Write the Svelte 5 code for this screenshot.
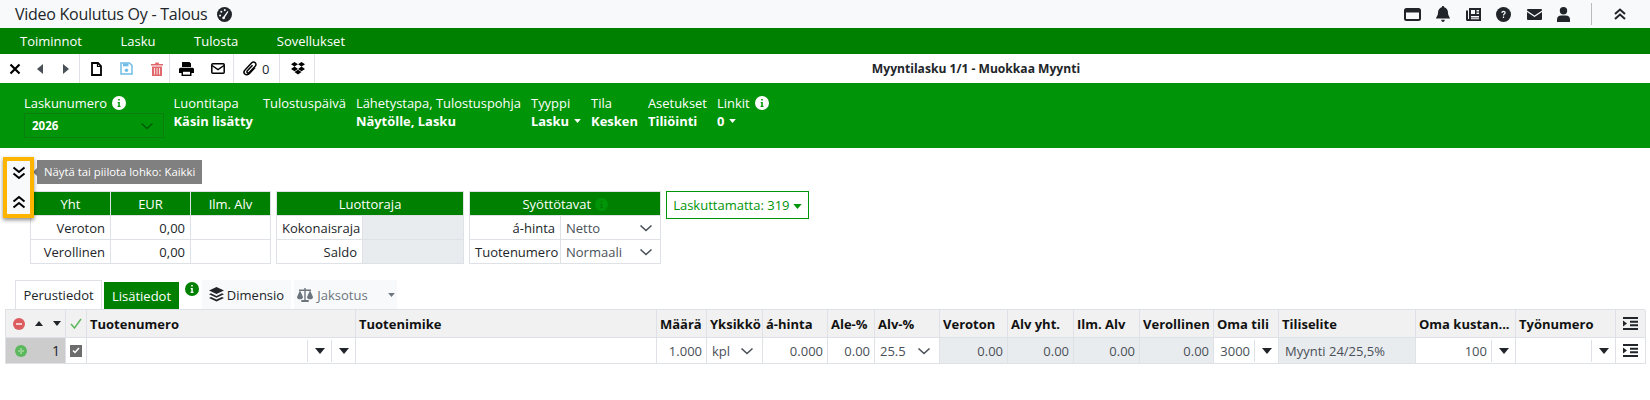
<script>
	const menu = ["Toiminnot", "Lasku", "Tulosta", "Sovellukset"];
	const heads = [
		["Määrä", 50], ["Yksikkö", 56], ["á-hinta", 65], ["Ale-%", 47], ["Alv-%", 65],
		["Veroton", 68], ["Alv yht.", 66], ["Ilm. Alv", 66], ["Verollinen", 74], ["Oma tili", 65],
		["Tiliselite", 137], ["Oma kustan...", 100], ["Työnumero", 100],
	];
</script>

{#snippet chevron()}
	<svg class="chev" width="14" height="8" viewBox="0 0 14 8"><path d="M1.500 1.500 7 6.500l5.500-5" fill="none" stroke="#495057" stroke-width="1.600" /></svg>
{/snippet}

{#snippet caret(cls = "")}
	<svg class="caret {cls}" width="10" height="6" viewBox="0 0 10 6"><path d="M0 0h10L5 6z" fill="currentColor" /></svg>
{/snippet}

{#snippet info(size = 14, bg = "#fff", fg = "#009408")}
	<svg width={size} height={size} viewBox="0 0 14 14" class="info">
		<circle cx="7" cy="7" r="7" fill={bg} />
		<path d="M6.200 3h1.600v1.500H6.200zM5.700 6h2.100v3.800h.7V11H5.600V9.800h.7V7.200h-.6z" fill={fg} />
	</svg>
{/snippet}

{#snippet indent()}
	<svg width="15" height="13" viewBox="0 0 15 13"><path d="M0 0h15v2H0zM7 3.700h8v2H7zM7 7.300h8v2H7zM0 11h15v2H0zM0 3.500l4 3-4 3z" fill="#212529" /></svg>
{/snippet}

<div class="page">
	<header class="topbar">
		<div class="brand">
			<span>Video Koulutus Oy - Talous</span>
			<svg width="15" height="15" viewBox="0 0 16 16"><circle cx="8" cy="8" r="8" fill="#212529" /><path d="M7 10 11.200 4.300l1 .7-3.700 6A1.500 1.500 0 1 1 7 10z" fill="#f8f9fa" /><circle cx="3.300" cy="9" r="1.100" fill="#f8f9fa" /><circle cx="4.600" cy="5" r="1.100" fill="#f8f9fa" /><circle cx="8.300" cy="3.300" r="1.100" fill="#f8f9fa" /></svg>
		</div>
		<div class="tools">
			<svg width="17" height="13" viewBox="0 0 17 13"><rect x="1" y="1" width="15" height="11" rx="1.500" fill="none" stroke="#212529" stroke-width="2" /><rect x="1" y="1" width="15" height="3.500" fill="#212529" /></svg>
			<svg width="14" height="16" viewBox="0 0 14 16"><path d="M7 0c.8 0 1.200.6 1.200 1.300C10.500 1.900 12 4 12 6.500c0 3.500 2 4.700 2 6H0c0-1.300 2-2.500 2-6C2 4 3.500 1.900 5.800 1.300 5.800.6 6.200 0 7 0zM5.200 13.800h3.600C8.800 15 8 16 7 16s-1.800-1-1.800-2.200z" fill="#212529" /></svg>
			<svg width="15" height="13" viewBox="0 0 15 13"><path d="M3 0h12v13H1.500A1.500 1.500 0 0 1 0 11.500V2.500h2v8.500h1zM5 2v4h4V2zm5.500 0v1.500H13V2zm0 2.500V6H13V4.500zM5 8v1.500h8V8zm0 2.200v1h8v-1z" fill="#212529" fill-rule="evenodd" /></svg>
			<svg width="15" height="15" viewBox="0 0 15 15"><circle cx="7.500" cy="7.500" r="7.500" fill="#212529" /><path d="M5.300 5.800c0-1.300 1-2 2.200-2 1.300 0 2.200.8 2.200 1.900 0 1.500-1.600 1.500-1.600 2.800H6.900c0-2 1.600-1.900 1.600-2.800 0-.4-.4-.7-1-.7s-.9.300-1 .9zM6.900 9.500h1.200v1.400H6.900z" fill="#f8f9fa" /></svg>
			<svg width="15" height="11" viewBox="0 0 15 11"><path d="M1 0h13a1 1 0 0 1 1 1v.6L7.500 6.500 0 1.600V1a1 1 0 0 1 1-1zM0 3l7.500 5L15 3v7a1 1 0 0 1-1 1H1a1 1 0 0 1-1-1z" fill="#212529" /></svg>
			<svg width="13" height="15" viewBox="0 0 13 15"><circle cx="6.500" cy="3.700" r="3.700" fill="#212529" /><path d="M0 15v-2.500C0 10 1.800 8.500 4 8.500h5c2.200 0 4 1.500 4 4V15z" fill="#212529" /></svg>
			<span class="vr"></span>
			<svg class="up" width="12" height="12" viewBox="0 0 12 12"><path d="M1 6l5-4.500L11 6M1 11l5-4.500L11 11" fill="none" stroke="#212529" stroke-width="2" /></svg>
		</div>
	</header>

	<nav class="menu">
		{#each menu as m}<span>{m}</span>{/each}
	</nav>

	<div class="toolbar">
		<div class="group g1">
			<svg width="12" height="12" viewBox="0 0 12 12"><path d="M1.500 1.500l9 9M10.500 1.500l-9 9" stroke="#000" stroke-width="2.200" /></svg>
			<svg class="prev" width="6" height="10" viewBox="0 0 6 10"><path d="M6 0v10L0 5z" fill="#495057" /></svg>
			<svg class="next" width="6" height="10" viewBox="0 0 6 10"><path d="M0 0v10l6-5z" fill="#495057" /></svg>
		</div>
		<div class="group g2">
			<svg width="11" height="14" viewBox="0 0 11 14"><path d="M1 1h6l3 3v9H1z" fill="none" stroke="#000" stroke-width="1.800" /><path d="M6.500 1v3.500H10" fill="none" stroke="#000" stroke-width="1.200" /></svg>
			<svg width="13" height="13" viewBox="0 0 13 13"><path d="M1 1h8.500L12 3.500V12H1z" fill="none" stroke="#6fbde6" stroke-width="1.500" /><rect x="3" y="1.500" width="5.500" height="2.800" fill="#6fbde6" /><circle cx="6.500" cy="8.200" r="1.700" fill="#6fbde6" /></svg>
			<svg width="12" height="14" viewBox="0 0 12 14"><path d="M0 2h4l.6-1.500h2.800L8 2h4v1.500H0zM1 4.500h10V14H1z" fill="#e0686d" /><path d="M3.500 6v6.500M6 6v6.500M8.500 6v6.500" stroke="#fff" stroke-width=".8" /></svg>
		</div>
		<div class="group g3">
			<svg width="15" height="14" viewBox="0 0 15 14"><path d="M3 0h7.500L12 1.500V5H3zM1.500 5.800h12A1.500 1.500 0 0 1 15 7.300V11h-2.500v3h-10v-3H0V7.300a1.500 1.500 0 0 1 1.500-1.500z" fill="#000" /><rect x="4" y="9.800" width="7" height="2.800" fill="#fff" /></svg>
			<svg width="14" height="11" viewBox="0 0 14 11"><rect x=".8" y=".8" width="12.400" height="9.400" rx="1" fill="none" stroke="#000" stroke-width="1.500" /><path d="M1 2.500l6 4 6-4" fill="none" stroke="#000" stroke-width="1.500" /></svg>
		</div>
		<div class="group g4">
			<svg width="14" height="15" viewBox="0 0 14 15"><path d="M12 6.500 6.500 12.500C5 14 2.800 14 1.800 13S.8 10.200 2 9l6.500-7C9.800.8 11.200.8 12.200 1.800s1 2.500 0 3.500L6.200 11.500c-.6.600-1.400.6-1.900.1s-.4-1.300.1-1.900L9.500 4.300" fill="none" stroke="#000" stroke-width="1.500" /></svg>
			<span class="count">0</span>
		</div>
		<div class="group g5">
			<svg width="14" height="13" viewBox="0 0 14 13"><path d="M3.500 0 7 2.300 3.500 4.600 0 2.300zM10.500 0 14 2.300l-3.500 2.300L7 2.300zM0 6.900l3.500-2.300L7 6.900 3.500 9.200zM10.500 4.600 14 6.900l-3.500 2.300L7 6.900zM3.500 10 7 7.700l3.500 2.300L7 12.500z" fill="#000" /></svg>
		</div>
		<div class="doc-title">Myyntilasku 1/1 - Muokkaa Myynti</div>
	</div>

	<section class="summary">
		<div class="field first">
			<label>Laskunumero {@render info()}</label>
			<div class="year"><b>2026</b><svg width="14" height="8" viewBox="0 0 14 8"><path d="M1.500 1.500 7 6.500l5.500-5" fill="none" stroke="#005c05" stroke-width="1.500" /></svg></div>
		</div>
		<div class="field"><label>Luontitapa</label><b>Käsin lisätty</b></div>
		<div class="field"><label>Tulostuspäivä</label></div>
		<div class="field"><label>Lähetystapa, Tulostuspohja</label><b>Näytölle, Lasku</b></div>
		<div class="field"><label>Tyyppi</label><b>Lasku{@render caret("tiny")}</b></div>
		<div class="field"><label>Tila</label><b>Kesken</b></div>
		<div class="field"><label>Asetukset</label><b>Tiliöinti</b></div>
		<div class="field"><label>Linkit {@render info()}</label><b>0{@render caret("tiny")}</b></div>
	</section>

	<section class="blocks">
		<div class="toggle">
			<svg width="14" height="14" viewBox="0 0 14 14"><path d="M1.500 1.500 7 6l5.500-4.500M1.500 7.500 7 12l5.500-4.500" fill="none" stroke="#000" stroke-width="2" /></svg>
			<svg width="14" height="14" viewBox="0 0 14 14"><path d="M1.500 6.500 7 2l5.500 4.500M1.500 12.500 7 8l5.500 4.500" fill="none" stroke="#000" stroke-width="2" /></svg>
		</div>
		<div class="tip">Näytä tai piilota lohko: Kaikki</div>

		<table class="mini t1">
			<colgroup><col class="c80" /><col class="c80" /><col class="c80" /></colgroup>
			<thead><tr><th>Yht</th><th>EUR</th><th>Ilm. Alv</th></tr></thead>
			<tbody>
				<tr><td>Veroton</td><td>0,00</td><td></td></tr>
				<tr><td>Verollinen</td><td>0,00</td><td></td></tr>
			</tbody>
		</table>
		<table class="mini t2">
			<colgroup><col class="c86" /><col class="c101" /></colgroup>
			<thead><tr><th colspan="2">Luottoraja</th></tr></thead>
			<tbody>
				<tr><td>Kokonaisraja</td><td class="ro"></td></tr>
				<tr><td>Saldo</td><td class="ro"></td></tr>
			</tbody>
		</table>
		<table class="mini t3">
			<colgroup><col class="c91" /><col class="c100" /></colgroup>
			<thead><tr><th colspan="2">Syöttötavat {@render info(13, "#009408", "#007a06")}</th></tr></thead>
			<tbody>
				<tr><td>á-hinta</td><td><div class="pick"><span>Netto</span>{@render chevron()}</div></td></tr>
				<tr><td>Tuotenumero</td><td><div class="pick"><span>Normaali</span>{@render chevron()}</div></td></tr>
			</tbody>
		</table>
		<button class="unbilled">Laskuttamatta: 319 {@render caret()}</button>
	</section>

	<div class="tabs">
		<span class="tab active">Perustiedot</span>
		<span class="tab green">Lisätiedot</span>
		<span class="tab-info">{@render info(14, "#008000", "#fff")}</span>
		<span class="tab soft">
			<svg width="15" height="15" viewBox="0 0 15 15"><path d="M7.500 0 15 3.500 7.500 7 0 3.500zM2 6.300l5.500 2.600L13 6.300l2 1-7.500 3.500L0 7.300zM2 10l5.500 2.600L13 10l2 1-7.500 3.500L0 11z" fill="#212529" /></svg>
			Dimensio
		</span>
		<span class="tab soft off">
			<svg width="18" height="14" viewBox="0 0 18 14"><path d="M8.300 0h1.400v1.500H15v1.400h-.7l2.700 6c0 1.500-1.300 2.400-3 2.400s-3-.9-3-2.400l2.700-6H9.700V12h3v2H5.300v-2h3V2.900H4.300l2.700 6c0 1.500-1.300 2.400-3 2.400S1 10.400 1 8.900l2.700-6H3V1.500h5.300z" fill="#6c757d" /></svg>
			Jaksotus
			<span class="drop">{@render caret("tiny")}</span>
		</span>
	</div>

	<div class="rows">
		<div class="cell head ctl">
			<svg width="12" height="12" viewBox="0 0 12 12"><circle cx="6" cy="6" r="6" fill="#dc5c60" /><rect x="3" y="5" width="6" height="2" fill="#fff" opacity=".7" /></svg>
			<svg class="arrow" width="8" height="5" viewBox="0 0 8 5"><path d="M0 5h8L4 0z" fill="#212529" /></svg>
			<svg class="arrow" width="8" height="5" viewBox="0 0 8 5"><path d="M0 0h8L4 5z" fill="#212529" /></svg>
		</div>
		<div class="cell head mid"><svg width="12" height="11" viewBox="0 0 12 11"><path d="M1 6l3.500 4L11 1" fill="none" stroke="#5cb85c" stroke-width="1.500" /></svg></div>
		<div class="cell head">Tuotenumero</div>
		<div class="cell head">Tuotenimike</div>
		{#each heads as h}
			<div class="cell head">{h[0]}</div>
		{/each}
		<div class="cell head mid">{@render indent()}</div>

		<div class="cell rownum">
			<svg width="12" height="12" viewBox="0 0 12 12"><circle cx="6" cy="6" r="6" fill="#5cb85c" /><path d="M5 3h2v2h2v2H7v2H5V7H3V5h2z" fill="#8fd08f" /></svg>
			<span>1</span>
		</div>
		<div class="cell mid"><span class="check"><svg width="8" height="7" viewBox="0 0 8 7"><path d="M1 3.500 3 5.500 7 1" fill="none" stroke="#fff" stroke-width="1.500" /></svg></span></div>
		<div class="cell inp">
			<span class="grow"></span>
			<span class="btn">{@render caret()}</span>
			<span class="btn">{@render caret()}</span>
		</div>
		<div class="cell"></div>
		<div class="cell num">1.000</div>
		<div class="cell sel"><span>kpl</span>{@render chevron()}</div>
		<div class="cell num">0.000</div>
		<div class="cell num">0.00</div>
		<div class="cell sel"><span>25.5</span>{@render chevron()}</div>
		<div class="cell num ro">0.00</div>
		<div class="cell num ro">0.00</div>
		<div class="cell num ro">0.00</div>
		<div class="cell num ro">0.00</div>
		<div class="cell inp"><span class="grow num-in">3000</span><span class="btn">{@render caret()}</span></div>
		<div class="cell ro text">Myynti 24/25,5%</div>
		<div class="cell inp"><span class="grow num-in">100</span><span class="btn">{@render caret()}</span></div>
		<div class="cell inp"><span class="grow"></span><span class="btn">{@render caret()}</span></div>
		<div class="cell mid">{@render indent()}</div>
	</div>
</div>

<style>
	:global(body) {
		margin: 0;
		background: #fff;
		font-family: "Open Sans", sans-serif;
		font-size: 13px;
		color: #212529;
	}

	.topbar {
		height: 28px;
		background: #f8f9fa;
		display: flex;
		align-items: center;
		justify-content: space-between;
		padding: 0 24px 0 15px;
	}

	.brand {
		display: flex;
		align-items: center;
		gap: 10px;
		font-size: 16px;
		letter-spacing: -0.26px;
		white-space: nowrap;
	}

	.tools {
		display: flex;
		align-items: center;
		gap: 15.500px;
	}

	.vr {
		width: 1px;
		height: 22px;
		background: #bbb;
		margin: 0 7px 0 5px;
	}

	.menu {
		height: 26px;
		background: #008000;
		color: #fff;
		display: flex;
		align-items: center;
		gap: 38.500px;
		padding-left: 20px;
	}

	.toolbar {
		height: 29px;
		display: flex;
		align-items: center;
	}

	.group {
		height: 100%;
		display: flex;
		align-items: center;
		border-right: 1px solid #dee2e6;
		box-sizing: border-box;
	}

	.g1 { width: 80px; padding-left: 9px; }
	.prev { margin-left: 16px; }
	.next { margin-left: 20px; }
	.g2 { width: 90px; padding-left: 11px; gap: 18px; }
	.g3 { width: 64px; padding-left: 9px; gap: 17px; }
	.g4 { width: 46px; padding-left: 9px; gap: 5px; }
	.g5 { width: 35px; padding-left: 11px; }

	.doc-title {
		flex: 1;
		text-align: center;
		font-weight: 700;
		font-size: 12.100px;
		padding-right: 13px;
	}

	.summary {
		height: 65px;
		background: #009408;
		color: #fff;
		display: flex;
		gap: 10px;
		padding: 11px 0 0 24px;
		box-sizing: border-box;
		font-size: 12.950px;
	}

	.field {
		display: flex;
		flex-direction: column;
		white-space: nowrap;
	}

	.field.first { width: 139.500px; }

	.field b { line-height: 18px; }

	.field label {
		display: flex;
		align-items: center;
		gap: 5px;
		height: 18px;
	}

	.year {
		height: 25px;
		margin-top: 1px;
		border: 1px solid #0a7f10;
		box-sizing: border-box;
		display: flex;
		align-items: center;
		justify-content: space-between;
		padding: 0 9px 0 7px;
		font-size: 11.500px;
	}

	.caret { color: #212529; vertical-align: middle; }
	.caret.tiny { width: 7px; height: 4px; color: inherit; margin: 0 0 3px 5px; }

	.blocks {
		position: relative;
		display: flex;
		align-items: flex-start;
		gap: 5px;
		padding: 43px 0 0 30px;
	}

	.toggle {
		position: absolute;
		left: 3px;
		top: 9px;
		width: 23px;
		height: 43px;
		border: 4px solid #ffb400;
		background: #f8f9fa;
		box-shadow: 0 2px 4px rgba(0, 0, 0, 0.45);
		display: flex;
		flex-direction: column;
		align-items: center;
		justify-content: space-between;
		padding: 5px 0;
		z-index: 2;
	}

	.tip {
		position: absolute;
		left: 37px;
		top: 12px;
		height: 24px;
		line-height: 24px;
		padding: 0 7px;
		background: #808080;
		color: #fff;
		font-size: 11.300px;
		white-space: nowrap;
	}

	.tip::before {
		content: "";
		position: absolute;
		left: -4px;
		top: 8px;
		border-style: solid;
		border-width: 4px 4px 4px 0;
		border-color: transparent #808080 transparent transparent;
	}

	.mini {
		border-collapse: collapse;
		table-layout: fixed;
		border: 1px solid #dee2e6;
	}

	.mini th {
		height: 24px;
		background: #008000;
		color: #fff;
		font-weight: 400;
		border: 1px solid #dee2e6;
		padding: 0;
		box-sizing: border-box;
	}

	.mini td {
		height: 24px;
		border: 1px solid #dee2e6;
		padding: 0 5px;
		text-align: right;
		box-sizing: border-box;
		white-space: nowrap;
	}

	.mini td.ro { background: #e9ecef; }

	.pick {
		display: flex;
		justify-content: space-between;
		align-items: center;
		color: #495057;
		padding-right: 2px;
	}

	.c80 { width: 80px; }
	.c86 { width: 86px; }
	.c101 { width: 101px; }
	.c91 { width: 91px; }
	.c100 { width: 100px; }

	.t1 { width: 240px; }
	.t2 { width: 187px; }
	.t3 { width: 191px; }

	th .info { vertical-align: -2px; }

	.unbilled {
		height: 28px;
		width: 143px;
		padding: 0;
		background: #fff;
		border: 1px solid #009408;
		color: #009408;
		font: inherit;
	}

	.unbilled .caret { color: #009408; width: 9px; height: 5px; }

	.tabs {
		display: flex;
		align-items: flex-end;
		height: 29px;
		margin: 16px 0 0 15px;
	}

	.tab {
		height: 29px;
		display: flex;
		align-items: center;
		justify-content: center;
		box-sizing: border-box;
		gap: 3px;
		white-space: nowrap;
	}

	.tab.active { width: 87px; border: 1px solid #dee2e6; border-bottom: none; }
	.tab.green { width: 75px; height: 27px; margin-left: 2px; background: #008000; color: #fff; }
	.tab-info { width: 23px; align-self: flex-start; padding: 2px 0 0 6px; box-sizing: border-box; line-height: 0; }
	.tab.soft { background: #f8f9fa; width: 89px; }
	.tab.off { width: 103px; margin-left: 3px; color: #6c757d; }
	.drop { margin-left: 12px; }

	.rows {
		margin: 0 5px;
		display: grid;
		grid-template-columns: 60px 21px 269px 301px 50px 56px 65px 47px 65px 68px 66px 66px 74px 65px 137px 100px 100px 30px;
		grid-template-rows: 28px 26px;
		border-top: 1px solid #dee2e6;
		border-left: 1px solid #dee2e6;
		box-sizing: border-box;
	}

	.cell {
		border-right: 1px solid #dee2e6;
		border-bottom: 1px solid #dee2e6;
		box-sizing: border-box;
		display: flex;
		align-items: center;
		min-width: 0;
		overflow: hidden;
		white-space: nowrap;
	}

	.head {
		background: #f1f1f1;
		font-weight: 700;
		padding-left: 3px;
		color: #111;
	}

	.head.ctl { padding-left: 7px; }
	.arrow { margin-left: 10px; }
	.mid { justify-content: center; padding-left: 0; }

	.rownum {
		background: #ccc;
		justify-content: space-between;
		padding: 0 5px 0 9px;
		font-size: 14px;
	}

	.check {
		width: 12px;
		height: 12px;
		background: #6c6c6c;
		display: flex;
		align-items: center;
		justify-content: center;
	}

	.inp { padding-left: 4px; }
	.grow { flex: 1; }
	.num-in { text-align: right; padding-right: 4px; color: #495057; }

	.btn {
		width: 23px;
		height: 22px;
		flex: none;
		display: flex;
		align-items: center;
		justify-content: center;
		border-left: 1px solid #dee2e6;
	}

	.num { justify-content: flex-end; padding-right: 4px; color: #495057; }
	.ro { background: #e9ecef; }
	.text { padding-left: 6px; color: #495057; }

	.cell.sel {
		justify-content: space-between;
		padding: 0 8px 0 5px;
		color: #495057;
	}
</style>
